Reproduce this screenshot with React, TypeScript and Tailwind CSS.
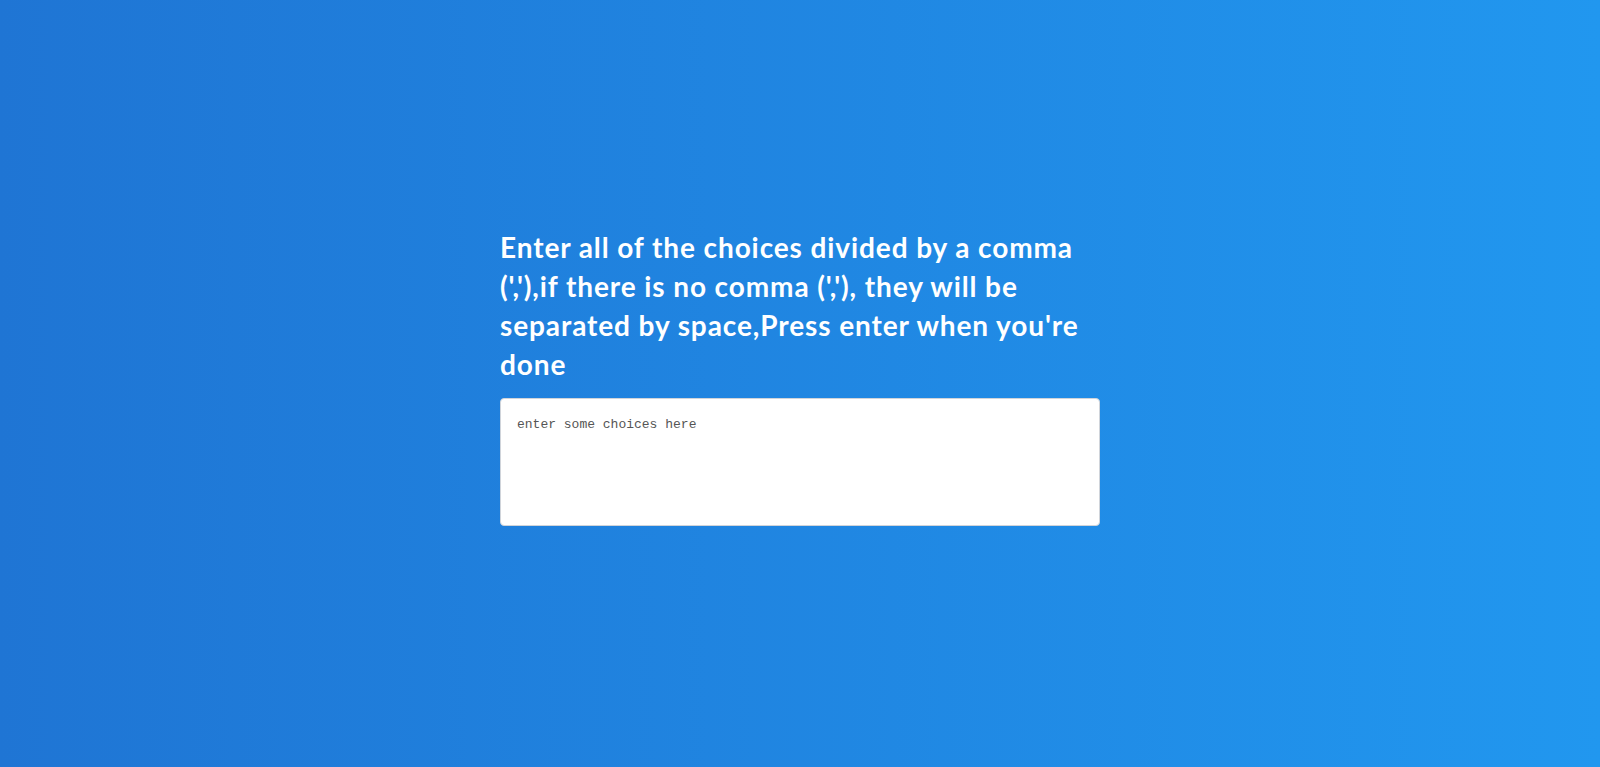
import { useState } from "react";

export default function App() {
  const [choices, setChoices] = useState("");

  const handleKeyDown = (e: React.KeyboardEvent<HTMLTextAreaElement>) => {
    if (e.key === "Enter") {
      e.preventDefault();
      console.log("choices:", choices);
    }
  };

  return (
    <div className="min-h-screen w-full bg-[linear-gradient(to_right,#1f75d4,#2197ef)] flex items-center justify-center">
      <div className="w-[600px] -mt-[14px]">
        <h1 className="font-['Lato',sans-serif] font-bold text-white text-[28px] tracking-[0.9px] leading-[39px] mb-[14px]">
          Enter all of the choices divided by a comma
          <br />
          (','),if there is no comma (','), they will be
          <br />
          separated by space,Press enter when you're
          <br />
          done
        </h1>
        <textarea
          value={choices}
          onChange={(e) => setChoices(e.target.value)}
          onKeyDown={handleKeyDown}
          placeholder="enter some choices here"
          className="block w-full h-[128px] resize-none rounded-[4px] border border-[#d0d4da] bg-white px-4 py-[16px] font-['Liberation_Mono',monospace] text-[13px] text-[#333] placeholder:text-[#555] outline-none"
        />
      </div>
    </div>
  );
}
